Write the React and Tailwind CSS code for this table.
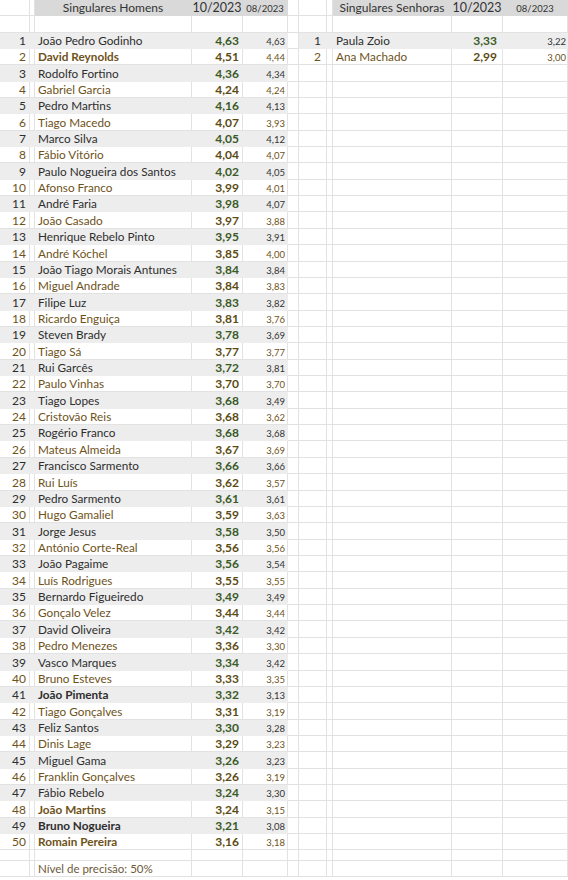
import React from "react";

const men = [
  ["João Pedro Godinho", "4,63", "4,63"],
  ["David Reynolds", "4,51", "4,44", true],
  ["Rodolfo Fortino", "4,36", "4,34"],
  ["Gabriel Garcia", "4,24", "4,24"],
  ["Pedro Martins", "4,16", "4,13"],
  ["Tiago Macedo", "4,07", "3,93"],
  ["Marco Silva", "4,05", "4,12"],
  ["Fábio Vitório", "4,04", "4,07"],
  ["Paulo Nogueira dos Santos", "4,02", "4,05"],
  ["Afonso Franco", "3,99", "4,01"],
  ["André Faria", "3,98", "4,07"],
  ["João Casado", "3,97", "3,88"],
  ["Henrique Rebelo Pinto", "3,95", "3,91"],
  ["André Kóchel", "3,85", "4,00"],
  ["João Tiago Morais Antunes", "3,84", "3,84"],
  ["Miguel Andrade", "3,84", "3,83"],
  ["Filipe Luz", "3,83", "3,82"],
  ["Ricardo Enguiça", "3,81", "3,76"],
  ["Steven Brady", "3,78", "3,69"],
  ["Tiago Sá", "3,77", "3,77"],
  ["Rui Garcês", "3,72", "3,81"],
  ["Paulo Vinhas", "3,70", "3,70"],
  ["Tiago Lopes", "3,68", "3,49"],
  ["Cristovão Reis", "3,68", "3,62"],
  ["Rogério Franco", "3,68", "3,68"],
  ["Mateus Almeida", "3,67", "3,69"],
  ["Francisco Sarmento", "3,66", "3,66"],
  ["Rui Luís", "3,62", "3,57"],
  ["Pedro Sarmento", "3,61", "3,61"],
  ["Hugo Gamaliel", "3,59", "3,63"],
  ["Jorge Jesus", "3,58", "3,50"],
  ["António Corte-Real", "3,56", "3,56"],
  ["João Pagaime", "3,56", "3,54"],
  ["Luís Rodrigues", "3,55", "3,55"],
  ["Bernardo Figueiredo", "3,49", "3,49"],
  ["Gonçalo Velez", "3,44", "3,44"],
  ["David Oliveira", "3,42", "3,42"],
  ["Pedro Menezes", "3,36", "3,30"],
  ["Vasco Marques", "3,34", "3,42"],
  ["Bruno Esteves", "3,33", "3,35"],
  ["João Pimenta", "3,32", "3,13", true],
  ["Tiago Gonçalves", "3,31", "3,19"],
  ["Feliz Santos", "3,30", "3,28"],
  ["Dinis Lage", "3,29", "3,23"],
  ["Miguel Gama", "3,26", "3,23"],
  ["Franklin Gonçalves", "3,26", "3,19"],
  ["Fábio Rebelo", "3,24", "3,30"],
  ["João Martins", "3,24", "3,15", true],
  ["Bruno Nogueira", "3,21", "3,08", true],
  ["Romain Pereira", "3,16", "3,18", true],
];

const women = [
  ["Paula Zoio", "3,33", "3,22"],
  ["Ana Machado", "2,99", "3,00"],
];

const COLS =
  "grid grid-cols-[30px_5px_157px_51px_45px_11px_28px_6px_119px_51px_65px]";

// one spreadsheet cell; filled cells hide the gridlines like Excel does
const Cell = ({ fill, header, className = "", children }) => {
  let bg = "bg-white border-r border-b border-[#e2e2e2]";
  if (fill) bg = "bg-[#ededed] border-r border-b border-[#ededed]";
  if (header) bg = "bg-[#d9d9d9] border-r border-b border-[#d9d9d9]";
  return (
    <div className={`${bg} flex items-end overflow-hidden whitespace-nowrap ${className}`}>
      {children}
    </div>
  );
};

const Row = ({ h, children }) => (
  <div className={`${COLS} ${h}`}>{children}</div>
);

const DataRow = ({ i, m, w }) => {
  const odd = i % 2 === 0;
  const mFill = odd;
  const wFill = w && i === 0;
  const text = odd ? "text-[#2e2e2e]" : "text-[#6e5219]";
  const score = odd ? "text-[#3a5a26]" : "text-[#5c4b12]";
  const small = odd ? "text-[#333333]" : "text-[#6e5219]";
  return (
    <Row h="h-[16.37px]">
      <Cell fill={mFill} className={`justify-end pr-[3px] text-[12px] leading-[14px] ${text}`}>
        {i + 1}
      </Cell>
      <Cell fill={mFill} />
      <Cell
        fill={mFill}
        className={`pl-[3px] text-[11.75px] leading-[14px] ${text} ${m[3] ? "font-bold" : ""}`}
      >
        {m[0]}
      </Cell>
      <Cell fill={mFill} className={`justify-end pr-[3px] text-[12px] leading-[14px] font-bold ${score}`}>
        {m[1]}
      </Cell>
      <Cell fill={mFill} className={`justify-end pr-[2px] text-[9.5px] leading-[12px] ${small}`}>
        {m[2]}
      </Cell>
      <Cell />
      <Cell fill={wFill} className={`justify-end pr-[5px] text-[12px] leading-[14px] ${text}`}>
        {w ? i + 1 : ""}
      </Cell>
      <Cell fill={wFill} />
      <Cell fill={wFill} className={`pl-[3px] text-[11.75px] leading-[14px] ${text}`}>
        {w ? w[0] : ""}
      </Cell>
      <Cell fill={wFill} className={`justify-end pr-[5px] text-[12px] leading-[14px] font-bold ${score}`}>
        {w ? w[1] : ""}
      </Cell>
      <Cell fill={wFill} className={`justify-end pr-[1px] text-[9.5px] leading-[12px] ${small}`}>
        {w ? w[2] : ""}
      </Cell>
    </Row>
  );
};

const EmptyRow = ({ h }) => (
  <Row h={h}>
    {Array.from({ length: 11 }).map((_, k) => (
      <Cell key={k} />
    ))}
  </Row>
);

export default function App() {
  return (
    <div className="w-[568px] h-[880px] bg-white overflow-hidden font-['Lato',sans-serif]">
      {/* header */}
      <Row h="h-[16px]">
        <Cell />
        <Cell />
        <Cell header className="justify-center text-[12px] leading-[15px] text-[#333333]">
          Singulares Homens
        </Cell>
        <Cell header className="justify-center text-[12.5px] leading-[15px] text-[#333333]">
          10/2023
        </Cell>
        <Cell header className="justify-center text-[9.5px] leading-[12px] text-[#333333]">
          08/2023
        </Cell>
        <Cell />
        <Cell />
        <Cell />
        <Cell header className="justify-center text-[12px] leading-[15px] text-[#333333]">
          Singulares Senhoras
        </Cell>
        <Cell header className="justify-center text-[12.5px] leading-[15px] text-[#333333]">
          10/2023
        </Cell>
        <Cell header className="justify-center text-[9.5px] leading-[12px] text-[#333333]">
          08/2023
        </Cell>
      </Row>
      <EmptyRow h="h-[16.5px]" />

      {men.map((m, i) => (
        <DataRow key={i} i={i} m={m} w={women[i]} />
      ))}

      <EmptyRow h="h-[11px]" />
      <Row h="h-[16px]">
        <Cell />
        <Cell />
        <Cell className="pl-[3px] text-[11.5px] leading-[14px] text-[#6e5a3a]">
          Nível de precisão: 50%
        </Cell>
        {Array.from({ length: 8 }).map((_, k) => (
          <Cell key={k} />
        ))}
      </Row>
    </div>
  );
}
